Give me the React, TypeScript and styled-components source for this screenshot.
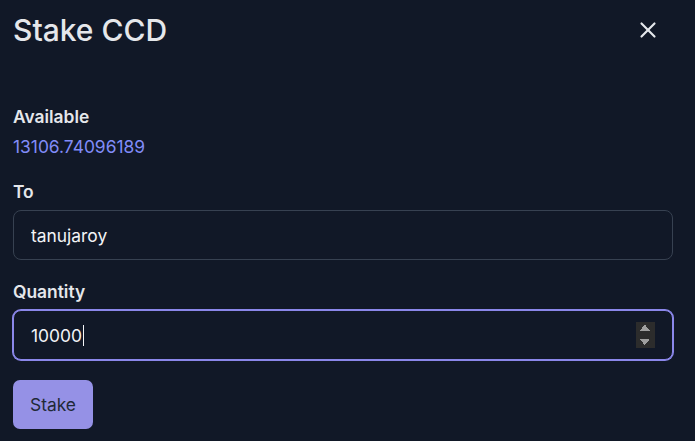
import React, { useEffect, useRef, useState } from "react";
import styled, { createGlobalStyle } from "styled-components";
import { X } from "lucide-react";

const GlobalStyle = createGlobalStyle`
  html, body {
    margin: 0;
    padding: 0;
    background: #111827;
    color-scheme: dark;
  }
  body {
    font-family: Inter, "Noto Sans", "Liberation Sans", sans-serif;
    color: #e5e7eb;
  }
`;

const FONT = 17.4;

const Page = styled.div`
  width: 660px;
  padding: 12px 22px 11px 13px;
  display: flex;
  flex-direction: column;
`;

const Header = styled.div`
  display: flex;
  align-items: center;
  justify-content: space-between;
  height: 36px;
  margin-bottom: 57px;
`;

const Title = styled.h2`
  margin: 0;
  font-size: 30px;
  line-height: 36px;
  font-weight: 500;
  color: #e5e7eb;
`;

const CloseButton = styled.button`
  width: 38px;
  height: 38px;
  margin-right: 6px;
  padding: 0;
  border: none;
  background: transparent;
  color: #e5e7eb;
  display: flex;
  align-items: center;
  justify-content: center;
  cursor: pointer;
`;

const Field = styled.div<{ $gap?: number }>`
  display: flex;
  flex-direction: column;
  gap: 6px;
  margin-bottom: ${(p) => p.$gap ?? 20}px;
`;

const Label = styled.label`
  font-size: ${FONT}px;
  line-height: 24px;
  font-weight: 600;
  color: #e5e7eb;
`;

const Balance = styled.div`
  font-size: ${FONT}px;
  line-height: 24px;
  color: #818cf8;
`;

const InputWrap = styled.div`
  position: relative;
  width: 660px;
`;

const Input = styled.input<{ $focused?: boolean }>`
  box-sizing: border-box;
  width: 660px;
  height: 50px;
  padding: 0 17px;
  border-radius: 8px;
  background: #111827;
  color: #f3f4f6;
  font-family: inherit;
  font-size: ${FONT}px;
  border: 1px solid ${(p) => (p.$focused ? "#8b87ea" : "#374151")};
  box-shadow: ${(p) => (p.$focused ? "0 0 0 1px #8b87ea" : "none")};
  outline: none;
  caret-color: #ffffff;

  &::-webkit-inner-spin-button {
    opacity: 1;
    transform: scale(1.3);
    transform-origin: center;
    margin-right: 2px;
  }
`;

const Caret = styled.span`
  position: absolute;
  top: 15px;
  width: 1px;
  height: 21px;
  background: #f3f4f6;
  pointer-events: none;
`;

const StakeButton = styled.button`
  align-self: flex-start;
  height: 49px;
  padding: 0 17px;
  border: none;
  border-radius: 7px;
  background: #9591e6;
  color: #1f2937;
  font-family: inherit;
  font-size: ${FONT}px;
  font-weight: 400;
  cursor: pointer;
`;

const QTY = "10000";

export default function App() {
  const [caretX, setCaretX] = useState<number | null>(null);
  const qtyRef = useRef<HTMLInputElement>(null);

  useEffect(() => {
    const el = qtyRef.current;
    if (!el) return;
    const ctx = document.createElement("canvas").getContext("2d");
    if (!ctx) return;
    const cs = getComputedStyle(el);
    ctx.font = `${cs.fontWeight} ${cs.fontSize} ${cs.fontFamily}`;
    setCaretX(18 + ctx.measureText(QTY).width + 1);
  }, []);

  return (
    <>
      <GlobalStyle />
      <Page>
        <Header>
          <Title>Stake CCD</Title>
          <CloseButton aria-label="Close">
            <X size={26} strokeWidth={2} />
          </CloseButton>
        </Header>

        <Field $gap={21}>
          <Label>Available</Label>
          <Balance>13106.74096189</Balance>
        </Field>

        <Field>
          <Label htmlFor="to">To</Label>
          <Input id="to" type="text" defaultValue="tanujaroy" />
        </Field>

        <Field>
          <Label htmlFor="qty">Quantity</Label>
          <InputWrap>
            <Input ref={qtyRef} id="qty" type="number" defaultValue={QTY} $focused />
            {caretX !== null && <Caret style={{ left: caretX }} />}
          </InputWrap>
        </Field>

        <StakeButton>Stake</StakeButton>
      </Page>
    </>
  );
}
